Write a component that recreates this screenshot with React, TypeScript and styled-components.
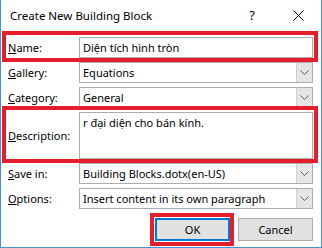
import styled, { createGlobalStyle } from 'styled-components'

const GlobalStyle = createGlobalStyle`
  html, body {
    margin: 0;
    padding: 0;
    background: #ffffff;
  }
  * {
    box-sizing: border-box;
  }
`

const Underline = ({ children }: { children: string }) => <u>{children}</u>

const Chevron = () => (
  <svg width="9" height="5" viewBox="0 0 9 5">
    <path d="M0.5 0.5 L4.5 4.5 L8.5 0.5" fill="none" stroke="#606060" strokeWidth="1" />
  </svg>
)

const CloseGlyph = () => (
  <svg width="11" height="11" viewBox="0 0 11 11">
    <path d="M0.5 0.5 L10.5 10.5 M10.5 0.5 L0.5 10.5" fill="none" stroke="#000" strokeWidth="1" />
  </svg>
)

const Combo = ({ value }: { value: string }) => (
  <ComboBox>
    <ComboText>{value}</ComboText>
    <DropButton>
      <Chevron />
    </DropButton>
  </ComboBox>
)

export default function App() {
  return (
    <>
      <GlobalStyle />
      <Window>
        <TitleBar>
          <Title>Create New Building Block</Title>
          <CaptionButton>?</CaptionButton>
          <CaptionButton>
            <CloseGlyph />
          </CaptionButton>
        </TitleBar>
        <Form>
          <Row $marked>
            <Label>
              <Underline>N</Underline>ame:
            </Label>
            <TextInput>Diện tích hình tròn</TextInput>
          </Row>
          <Row>
            <Label>
              <Underline>G</Underline>allery:
            </Label>
            <Combo value="Equations" />
          </Row>
          <Row>
            <Label>
              <Underline>C</Underline>ategory:
            </Label>
            <Combo value="General" />
          </Row>
          <Row $marked $tall>
            <Label>
              <Underline>D</Underline>escription:
            </Label>
            <TextArea>r đại diện cho bán kính.</TextArea>
          </Row>
          <Row>
            <Label>
              <Underline>S</Underline>ave in:
            </Label>
            <Combo value="Building Blocks.dotx(en-US)" />
          </Row>
          <Row>
            <Label>
              <Underline>O</Underline>ptions:
            </Label>
            <Combo value="Insert content in its own paragraph" />
          </Row>
          <ButtonBar>
            <Button $default>OK</Button>
            <Button>Cancel</Button>
          </ButtonBar>
        </Form>
      </Window>
    </>
  )
}

const Window = styled.div`
  width: 322px;
  height: 248px;
  background: #ffffff;
  border: 1px solid #4a90d6;
  border-top: none;
  font-family: 'Noto Sans', 'Open Sans', sans-serif;
  font-size: 11px;
  color: #000000;
  overflow: hidden;
`

const TitleBar = styled.div`
  height: 30px;
  display: flex;
  align-items: center;
`

const Title = styled.div`
  flex: 1;
  padding-left: 9px;
  font-size: 11.5px;
`

const CaptionButton = styled.div`
  width: 46px;
  height: 30px;
  display: flex;
  align-items: center;
  justify-content: center;
  font-size: 13px;
`

const Form = styled.div`
  padding: 7px 8px 0 7px;
  display: flex;
  flex-direction: column;
  gap: 4px;
`

const Row = styled.div<{ $marked?: boolean; $tall?: boolean }>`
  position: relative;
  display: flex;
  align-items: center;
  height: ${(p) => (p.$tall ? '47px' : '21px')};

  ${(p) =>
    p.$marked &&
    `
    &::after {
      content: '';
      position: absolute;
      top: -6px;
      bottom: -4px;
      left: -6px;
      right: -5px;
      border: 4px solid #e61e2b;
      pointer-events: none;
    }
  `}
`

const Label = styled.div`
  width: 71px;
  flex: none;
  white-space: nowrap;
`

const Field = styled.div`
  flex: 1;
  height: 100%;
  border: 1px solid #abadb3;
  background: #ffffff;
  padding: 0 3px;
  white-space: nowrap;
  overflow: hidden;
`

const TextInput = styled(Field)`
  display: flex;
  align-items: center;
`

const TextArea = styled(Field)`
  padding-top: 2px;
`

const ComboBox = styled(Field)`
  display: flex;
  align-items: center;
  padding-right: 0;
`

const ComboText = styled.div`
  flex: 1;
`

const DropButton = styled.div`
  width: 16px;
  height: 100%;
  background: #e5e5e5;
  border-left: 1px solid #d0d0d0;
  display: flex;
  align-items: center;
  justify-content: center;
`

const ButtonBar = styled.div`
  display: flex;
  justify-content: flex-end;
  gap: 8px;
  margin-top: 5px;
`

const Button = styled.div<{ $default?: boolean }>`
  position: relative;
  width: 75px;
  height: 23px;
  display: flex;
  align-items: center;
  justify-content: center;
  background: #e1e1e1;
  border: ${(p) => (p.$default ? '2px solid #0078d7' : '1px solid #adadad')};

  ${(p) =>
    p.$default &&
    `
    &::after {
      content: '';
      position: absolute;
      top: -7px;
      bottom: -7px;
      left: -7px;
      right: -6px;
      border: 4px solid #e61e2b;
      pointer-events: none;
    }
  `}
`
